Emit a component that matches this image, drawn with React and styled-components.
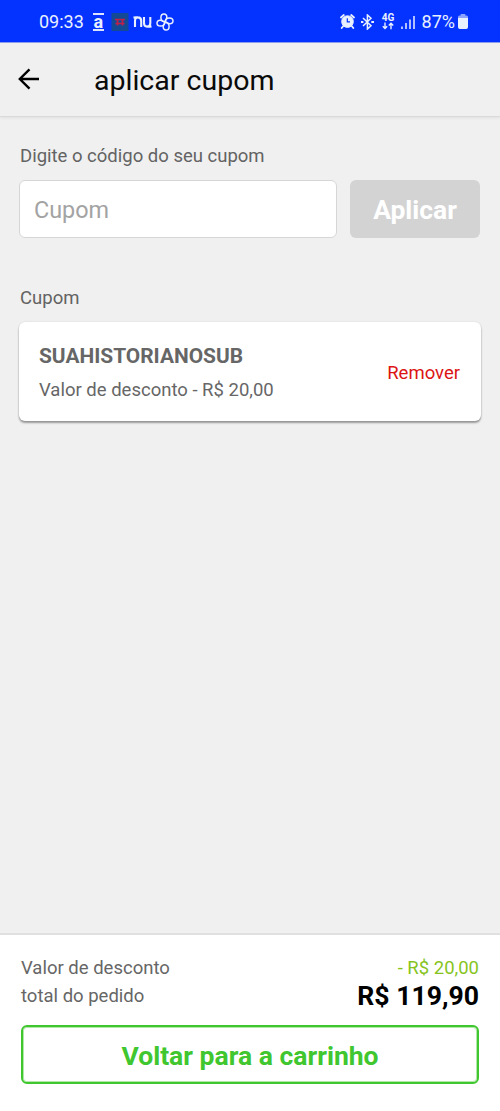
import React, { useState } from 'react';
import styled, { createGlobalStyle } from 'styled-components';

const GlobalStyle = createGlobalStyle`
  * {
    box-sizing: border-box;
  }

  body {
    margin: 0;
    background: #f0f0f0;
    font-family: Roboto, 'Liberation Sans', sans-serif;
    color: #666;
  }
`;

const Screen = styled.div`
  display: flex;
  flex-direction: column;
  width: 500px;
  height: 1111px;
  overflow: hidden;
`;

const StatusBar = styled.div`
  display: flex;
  align-items: center;
  height: 43px;
  padding: 1px 32px 0 39px;
  background: #0433ff;
  color: #e9f0ff;
  border-bottom: 1px solid #8c9ff0;
`;

const StatusText = styled.span`
  margin-left: ${props => props.$gap || 0}px;
  font-size: 18px;
  line-height: 20px;
`;

const StatusGroup = styled.div`
  display: flex;
  align-items: center;
  margin-left: ${props => props.$push ? 'auto' : '9px'};
`;

const StatusIcon = styled.svg`
  display: block;
  flex: none;
  margin-left: ${props => props.$gap || 0}px;
`;

const BankBadge = styled.span`
  width: 11px;
  height: 18px;
  border-top: 2px solid #dbe4ff;
  border-bottom: 2px solid #dbe4ff;
  font-size: 18px;
  font-weight: 700;
  line-height: 13px;
  text-align: center;
`;

const Network = styled.div`
  display: flex;
  flex-direction: column;
  align-items: center;
  width: 13px;
  margin-left: 8px;
  font-size: 10px;
  font-weight: 700;
  line-height: 9px;
`;

const Header = styled.header`
  display: flex;
  align-items: center;
  height: 74px;
  padding: 0 17px 1px;
  border-bottom: 1px solid #dadada;
  box-shadow: 0 1px 3px rgba(0, 0, 0, 0.07);
`;

const BackButton = styled.button`
  display: flex;
  padding: 0;
  border: 0;
  background: none;
  color: #000;
`;

const Title = styled.h1`
  margin: 3px 0 0 53px;
  color: #0a0a0a;
  font-size: 28.5px;
  font-weight: 400;
  line-height: 34px;
`;

const Content = styled.main`
  flex: 1;
  padding: 28px 19px 0;
`;

const Label = styled.label`
  display: block;
  padding-left: 1px;
  color: #636363;
  font-size: 18.5px;
  line-height: 22px;
`;

const CouponForm = styled.form`
  display: flex;
  gap: 13px;
  margin: 13px 0 49px;
`;

const CouponInput = styled.input`
  width: 318px;
  height: 58px;
  padding: 2px 14px 0;
  border: 1px solid #d6d6d6;
  border-radius: 6px;
  outline: none;
  background: #fff;
  color: #444;
  font-family: inherit;
  font-size: 23.4px;

  &::placeholder {
    color: #a3a3a3;
  }
`;

const ApplyButton = styled.button`
  width: 130px;
  height: 58px;
  padding: 2px 0 0;
  border: 0;
  border-radius: 6px;
  background: #d3d3d3;
  color: #fff;
  font-family: inherit;
  font-size: 26.4px;
  font-weight: 700;
`;

const CouponCard = styled.section`
  display: flex;
  align-items: center;
  justify-content: space-between;
  height: 99px;
  margin-top: 13px;
  padding: 2px 21px 0 20px;
  border-radius: 6px;
  background: #fff;
  box-shadow: 0 2px 2px rgba(0, 0, 0, 0.36), 0 0 2px rgba(0, 0, 0, 0.12);
`;

const CouponName = styled.h2`
  margin: 0 0 11px;
  font-size: 20.9px;
  font-weight: 700;
  line-height: 24px;
`;

const CouponValue = styled.p`
  margin: 0;
  font-size: 18.5px;
  line-height: 22px;
`;

const RemoveButton = styled.button`
  padding: 0;
  border: 0;
  background: none;
  color: #dc1414;
  font-family: inherit;
  font-size: 18.5px;
  line-height: 22px;
`;

const Footer = styled.footer`
  height: 178px;
  padding: 19px 21px 0;
  border-top: 2px solid #e0e0e0;
  background: #fff;
`;

const SummaryRow = styled.div`
  display: flex;
  align-items: center;
  justify-content: space-between;
  height: 28px;
  font-size: 18.5px;
  line-height: 22px;
`;

const Discount = styled.span`
  color: #86c41d;
`;

const Total = styled.strong`
  color: #000;
  font-size: 26.6px;
  font-weight: 700;
`;

const CartButton = styled.button`
  width: 100%;
  height: 59px;
  margin-top: 15px;
  padding: 2px 0 0;
  border: 2px solid #40c62e;
  border-radius: 6px;
  background: #fff;
  box-shadow: inset 0 0 0 1px rgba(64, 198, 46, 0.4);
  color: #40c62e;
  font-family: inherit;
  font-size: 26.5px;
  font-weight: 700;
`;

const NotificationIcons = () => (
  <StatusGroup>
    <BankBadge>a</BankBadge>
    <StatusIcon $gap={7} width="18" height="18" viewBox="0 0 17 18">
      <rect width="17" height="18" fill="#134a93" />
      <path d="M3.5 6.5h10M4 10.5h9M6 6v6.5M11 6v6.5" stroke="#c21f48" strokeWidth="1.7" fill="none" />
    </StatusIcon>
    <StatusIcon $gap={4} width="19" height="12" viewBox="0 0 19 12" fill="none" stroke="currentColor" strokeWidth="2.1">
      <path d="M2 11V5C2 3 3 1.4 5 1.4S8.2 3 8.2 5v6M5 1.4Q2.5 1.2.5 1.6" />
      <path d="M11 1v6c0 2 1.2 3.6 3.1 3.6s3.2-1.6 3.2-3.6V1M14.1 10.6q2.4.2 4.4-.2" />
    </StatusIcon>
    <StatusIcon $gap={4} width="18" height="18" viewBox="0 0 18 18" fill="none" stroke="currentColor" strokeWidth="1.5" strokeLinejoin="round">
      {[0, 90, 180, 270].map(angle => (
        <path key={angle} transform={`rotate(${angle} 9 9)`} d="M9 9C6.3 8.6 4.9 6.6 4.9 4.6 4.9 2.5 6.3 1 8 1c1.9 0 3 1.5 2.8 3.4C10.6 6.2 9.4 7 9 9Z" />
      ))}
    </StatusIcon>
  </StatusGroup>
);

const SystemIcons = () => (
  <StatusGroup $push>
    <StatusIcon width="15" height="15" viewBox="0 0 15 15" fill="none" stroke="currentColor">
      <circle cx="7.5" cy="7.6" r="5.8" fill="currentColor" />
      <path d="M1 3.5 3.8 1M14 3.5 11.2 1M3.3 12 1.7 14M11.7 12l1.6 2" strokeWidth="1.8" strokeLinecap="round" />
      <path d="M7.3 4.2v3.7H10" stroke="#0433ff" strokeWidth="1.2" />
    </StatusIcon>
    <StatusIcon $gap={6} width="13" height="16" viewBox="0 0 13 16" fill="none" stroke="currentColor" strokeWidth="1.5">
      <path d="m2 4 8 7.7L6.4 15V1L10 4.3 2 12" />
      <path d="M0 8h2.4M10.3 8H13" strokeWidth="1.8" />
    </StatusIcon>
    <Network>
      4G
      <svg width="12" height="8" viewBox="0 0 12 8" fill="none" stroke="currentColor" strokeWidth="1.4">
        <path d="M3 .5v6M.8 4.2 3 6.5l2.2-2.3M9 7.2v-6M6.8 3.5 9 1.2l2.2 2.3" />
      </svg>
    </Network>
    <StatusIcon $gap={6} width="14" height="14" viewBox="0 0 14 14" stroke="currentColor" strokeWidth="1.5">
      <path d="M1 11.5V14M5 8v6M9 4.5V14M13 1v13" />
    </StatusIcon>
    <StatusText $gap={7}>87%</StatusText>
    <StatusIcon $gap={3} width="10" height="15" viewBox="0 0 11 15" preserveAspectRatio="none">
      <path d="M3 0h5v1.5h1.5q1.5 0 1.5 1.5v1H0V3q0-1.5 1.5-1.5H3z" fill="#8ca4ff" />
      <path d="M0 4h11v9q0 2-2 2H2q-2 0-2-2z" fill="currentColor" />
    </StatusIcon>
  </StatusGroup>
);

const App = () => {
  const [code, setCode] = useState('');

  return (
    <>
      <GlobalStyle />
      <Screen>
        <StatusBar>
          <StatusText>09:33</StatusText>
          <NotificationIcons />
          <SystemIcons />
        </StatusBar>
        <Header>
          <BackButton type="button" aria-label="Voltar">
            <svg width="24" height="24" viewBox="0 0 24 24" fill="none" stroke="currentColor" strokeWidth="2.4">
              <path d="M22 12H3M12.5 2.3 2.8 12l9.7 9.7" />
            </svg>
          </BackButton>
          <Title>aplicar cupom</Title>
        </Header>
        <Content>
          <Label htmlFor="coupon">Digite o código do seu cupom</Label>
          <CouponForm onSubmit={e => e.preventDefault()}>
            <CouponInput id="coupon" placeholder="Cupom" value={code} onChange={e => setCode(e.target.value)} />
            <ApplyButton type="submit">Aplicar</ApplyButton>
          </CouponForm>
          <Label as="div">Cupom</Label>
          <CouponCard>
            <div>
              <CouponName>SUAHISTORIANOSUB</CouponName>
              <CouponValue>Valor de desconto - R$ 20,00</CouponValue>
            </div>
            <RemoveButton type="button">Remover</RemoveButton>
          </CouponCard>
        </Content>
        <Footer>
          <SummaryRow>
            <span>Valor de desconto</span>
            <Discount>- R$ 20,00</Discount>
          </SummaryRow>
          <SummaryRow>
            <span>total do pedido</span>
            <Total>R$ 119,90</Total>
          </SummaryRow>
          <CartButton type="button">Voltar para a carrinho</CartButton>
        </Footer>
      </Screen>
    </>
  );
};

export default App;
